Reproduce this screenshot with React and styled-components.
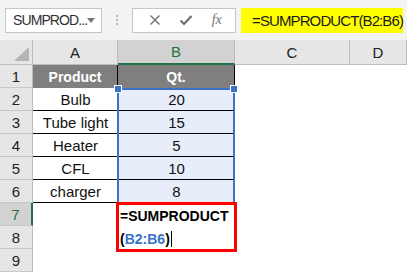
import React from 'react';
import styled, { createGlobalStyle } from 'styled-components';

const GlobalStyle = createGlobalStyle`
    html, body {
        margin: 0;
        padding: 0;
        background: #ffffff;
    }
    * {
        box-sizing: border-box;
    }
`;

const Page = styled.div`
    width: 407px;
    height: 272px;
    overflow: hidden;
    display: flex;
    flex-direction: column;
    font-family: "Liberation Sans", Arial, sans-serif;
`;

const Toolbar = styled.div`
    height: 40px;
    background: #f3f3f3;
    display: flex;
    align-items: center;
    padding: 0 4px 0 5px;
`;

const NameBox = styled.div`
    width: 101px;
    height: 25px;
    background: #ffffff;
    border: 1px solid #c6c6c6;
    display: flex;
    align-items: center;
    justify-content: space-between;
    padding: 0 6px 0 7px;
    font-size: 14px;
    letter-spacing: -0.9px;
    color: #303030;
`;

const Caret = styled.span`
    width: 0;
    height: 0;
    border-left: 4px solid transparent;
    border-right: 4px solid transparent;
    border-top: 5px solid #777777;
`;

const Grip = styled.div`
    width: 32px;
    display: flex;
    flex-direction: column;
    align-items: center;
    gap: 2px;
`;

const GripDot = styled.span`
    width: 2px;
    height: 2px;
    background: #b8b8b8;
`;

const IconBox = styled.div`
    width: 109px;
    height: 25px;
    background: #ffffff;
    border: 1px solid #c6c6c6;
    display: flex;
    align-items: center;
    justify-content: space-around;
    padding: 0 4px 0 6px;
    color: #707070;
`;

const Fx = styled.span`
    font-family: "Liberation Serif", serif;
    font-style: italic;
    font-size: 14px;
    color: #707070;
`;

const Formula = styled.div`
    flex: 1;
    margin-left: 5px;
    height: 25px;
    background: #ffff00;
    display: flex;
    align-items: center;
    padding-left: 11px;
    font-size: 15px;
    letter-spacing: -0.9px;
    color: #1a1a1a;
`;

const Sheet = styled.div`
    flex: 1;
    display: grid;
    grid-template-columns: 33px 85px 117px 115px 1fr;
    grid-template-rows: 25px repeat(9, 23px);
    background: #ffffff;
`;

const Corner = styled.div`
    grid-column: 1;
    grid-row: 1;
    background: #e6e6e6;
    border-right: 1px solid #bdbdbd;
    border-bottom: 1px solid #bdbdbd;
    position: relative;
`;

const CornerMark = styled.span`
    position: absolute;
    right: 3px;
    bottom: 3px;
    width: 0;
    height: 0;
    border-left: 15px solid transparent;
    border-bottom: 14px solid #b5b5b5;
`;

const ColHeader = styled.div`
    grid-column: ${({ col }) => col};
    grid-row: 1;
    background: ${({ active }) => active ? '#d2d2d2' : '#e6e6e6'};
    color: ${({ active }) => active ? '#217346' : '#222222'};
    border-right: 1px solid #bdbdbd;
    border-bottom: ${({ active }) => active ? '2px solid #217346' : '1px solid #bdbdbd'};
    display: flex;
    align-items: center;
    justify-content: center;
    font-size: 15px;
`;

const RowHeader = styled.div`
    grid-column: 1;
    grid-row: ${({ row }) => row};
    background: ${({ active }) => active ? '#d2d2d2' : '#e6e6e6'};
    color: ${({ active }) => active ? '#217346' : '#222222'};
    border-right: ${({ active }) => active ? '2px solid #217346' : '1px solid #bdbdbd'};
    border-bottom: 1px solid #c9c9c9;
    display: flex;
    align-items: center;
    justify-content: center;
    font-size: 15px;
`;

const Cell = styled.div`
    grid-column: ${({ col }) => col};
    grid-row: ${({ row }) => row};
    display: flex;
    align-items: center;
    justify-content: center;
    font-size: ${({ head }) => head ? '14px' : '15px'};
    font-weight: ${({ head }) => head ? 700 : 400};
    color: ${({ head }) => head ? '#ffffff' : '#111111'};
    background: ${({ head, selected }) => head ? '#7f7f7f' : selected ? '#e7eef9' : '#ffffff'};
    border-right: ${({ head }) => head ? '1px solid #000000' : 'none'};
    border-bottom: ${({ lined }) => lined ? '1px solid #000000' : 'none'};
`;

const Selection = styled.div`
    grid-column: 3 / 4;
    grid-row: 3 / 8;
    margin: 0 0 -1px -1px;
    border: 2px solid #3a72c8;
    position: relative;
    pointer-events: none;
`;

const Handle = styled.span`
    position: absolute;
    top: -4px;
    ${({ side }) => side === 'left' ? 'left: -4px;' : 'right: -4px;'}
    width: 6px;
    height: 6px;
    background: #3a72c8;
    border: 1px solid #ffffff;
    box-sizing: content-box;
    margin: -1px;
`;

const Editor = styled.div`
    grid-column: 3 / 4;
    grid-row: 8 / 10;
    margin: -1px -2px -3px -2px;
    border: 3px solid #ff0000;
    background: #ffffff;
    padding: 0 0 0 1px;
    font-size: 14px;
    font-weight: 700;
    line-height: 23px;
    color: #000000;
    position: relative;
    z-index: 2;
`;

const Ref = styled.span`
    color: #3a72c8;
`;

const CaretLine = styled.span`
    display: inline-block;
    width: 1px;
    height: 16px;
    background: #000000;
    vertical-align: -3px;
    margin-left: 1px;
`;

const rows = [
    { n: 1, a: 'Product', b: 'Qt.', head: true },
    { n: 2, a: 'Bulb', b: '20' },
    { n: 3, a: 'Tube light', b: '15' },
    { n: 4, a: 'Heater', b: '5' },
    { n: 5, a: 'CFL', b: '10' },
    { n: 6, a: 'charger', b: '8' },
    { n: 7 },
    { n: 8 },
    { n: 9 },
];

const CloseIcon = () => (
    <svg width="12" height="12" viewBox="0 0 12 12">
        <path d="M1.5 1.5 L10.5 10.5 M10.5 1.5 L1.5 10.5" stroke="#6f6f6f" strokeWidth="1.4" fill="none" />
    </svg>
);

const CheckIcon = () => (
    <svg width="14" height="12" viewBox="0 0 14 12">
        <path d="M1.5 6.5 L5 10 L12.5 2" stroke="#6f6f6f" strokeWidth="2.2" fill="none" />
    </svg>
);

class App extends React.Component {
    render() {
        return (
            <Page>
                <GlobalStyle />
                <Toolbar>
                    <NameBox>
                        <span>SUMPROD...</span>
                        <Caret />
                    </NameBox>
                    <Grip>
                        <GripDot />
                        <GripDot />
                        <GripDot />
                    </Grip>
                    <IconBox>
                        <CloseIcon />
                        <CheckIcon />
                        <Fx>fx</Fx>
                    </IconBox>
                    <Formula>=SUMPRODUCT(B2:B6)</Formula>
                </Toolbar>
                <Sheet>
                    <Corner><CornerMark /></Corner>
                    <ColHeader col={2}>A</ColHeader>
                    <ColHeader col={3} active>B</ColHeader>
                    <ColHeader col={4}>C</ColHeader>
                    <ColHeader col={5}>D</ColHeader>
                    {rows.map(r => {
                        const row = r.n + 1;
                        const filled = !r.head && !!r.a;
                        return (
                            <React.Fragment key={r.n}>
                                <RowHeader row={row} active={r.n === 7}>{r.n}</RowHeader>
                                <Cell row={row} col={2} head={r.head} lined={filled}>{r.a}</Cell>
                                <Cell row={row} col={3} head={r.head} lined={filled} selected={filled}>{r.b}</Cell>
                                <Cell row={row} col={4} />
                                <Cell row={row} col={5} />
                            </React.Fragment>
                        );
                    })}
                    <Selection>
                        <Handle side="left" />
                        <Handle side="right" />
                    </Selection>
                    <Editor>
                        =SUMPRODUCT<br />
                        (<Ref>B2:B6</Ref>)<CaretLine />
                    </Editor>
                </Sheet>
            </Page>
        );
    }
}

export default App;
